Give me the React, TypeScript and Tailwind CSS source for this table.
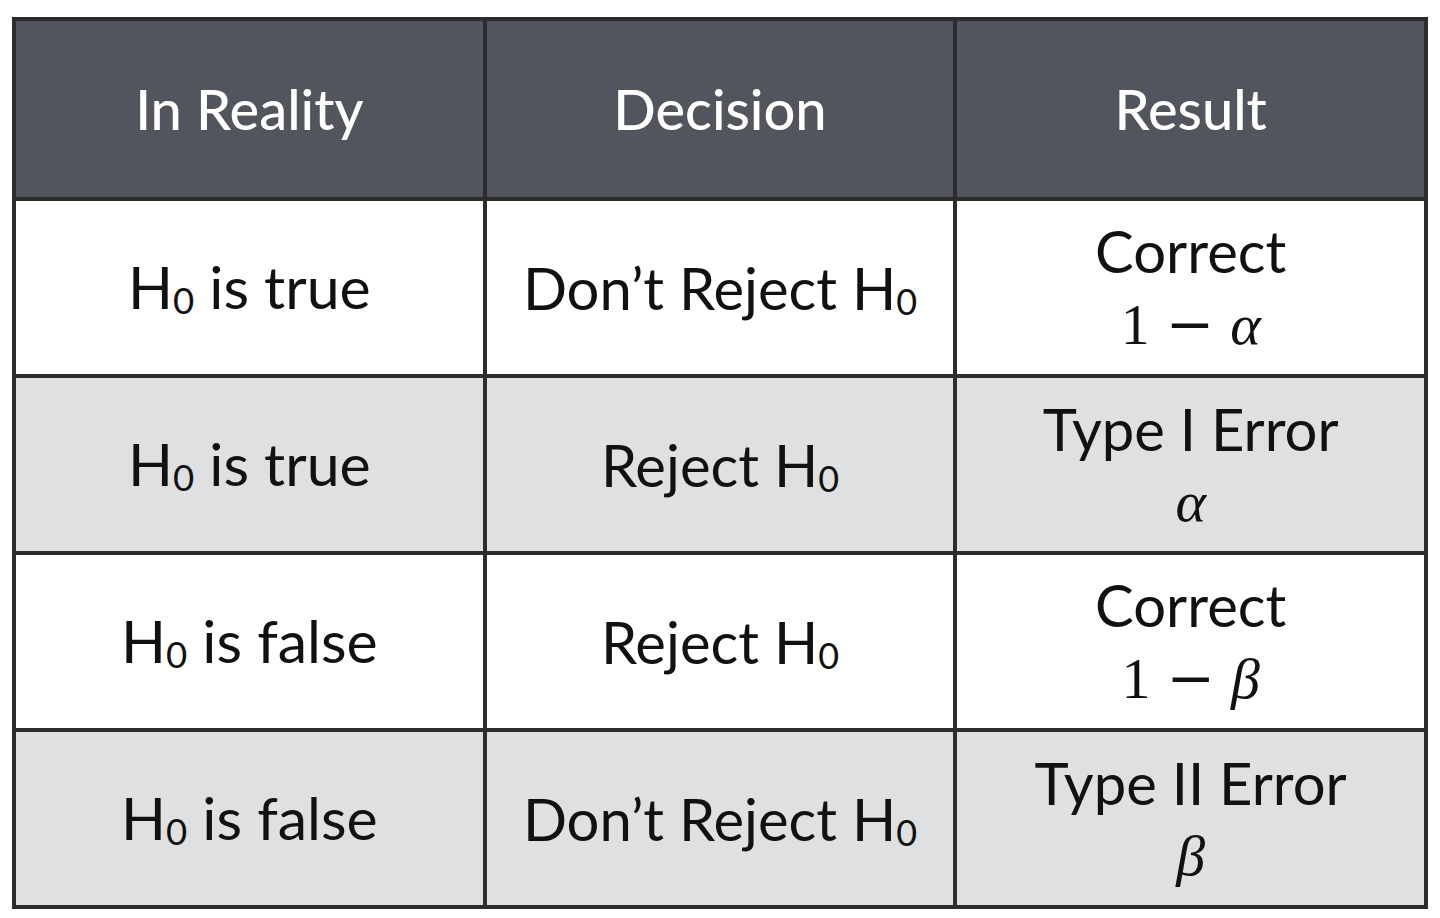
// Hypothesis testing outcomes table
const sans = "font-['Lato','Liberation_Sans',sans-serif]";
const serif = "font-['Liberation_Serif','DejaVu_Serif',serif]";

function H0() {
  return (
    <span>
      H<span className="relative top-[0.14em] text-[0.62em]">0</span>
    </span>
  );
}

function Math({ one, sym }: { one?: boolean; sym: string }) {
  return (
    <div className={`${serif} mt-[6px] text-[58px] leading-[66px] text-[#111]`}>
      {one && (
        <>
          1<span className="mx-[16px] font-['DejaVu_Serif',serif] font-light">−</span>
        </>
      )}
      <span className="italic">{sym}</span>
    </div>
  );
}

type Row = { reality: string; decision: 'keep' | 'reject'; result: string; one?: boolean; sym: string; gray: boolean };

const rows: Row[] = [
  { reality: 'true', decision: 'keep', result: 'Correct', one: true, sym: 'α', gray: false },
  { reality: 'true', decision: 'reject', result: 'Type I Error', sym: 'α', gray: true },
  { reality: 'false', decision: 'reject', result: 'Correct', one: true, sym: 'β', gray: false },
  { reality: 'false', decision: 'keep', result: 'Type II Error', sym: 'β', gray: true },
];

export default function App() {
  return (
    <div className="w-[1440px] h-[918px] bg-white pt-[17px] pl-[12px]">
      <table className={`${sans} w-[1416px] border-collapse border-[4px] border-[#2c2c2f] table-fixed`}>
        <thead>
          <tr className="h-[180px] bg-[#52555d] text-white">
            {['In Reality', 'Decision', 'Result'].map((h) => (
              <th key={h} className="border-[4px] border-[#2c2c2f] text-[56px] font-medium text-center align-middle">
                {h}
              </th>
            ))}
          </tr>
        </thead>
        <tbody>
          {rows.map((r, i) => (
            <tr key={i} className={`h-[177px] ${r.gray ? 'bg-[#dfe0e2]' : 'bg-white'} text-[#111]`}>
              <td className="border-[4px] border-[#2c2c2f] text-[59px] text-center align-middle">
                <H0 /> is {r.reality}
              </td>
              <td className="border-[4px] border-[#2c2c2f] text-[58px] text-center align-middle">
                {r.decision === 'keep' ? 'Don’t Reject ' : 'Reject '}
                <H0 />
              </td>
              <td className="border-[4px] border-[#2c2c2f] text-center align-middle">
                <div className="text-[58px] leading-[68px]">{r.result}</div>
                <Math one={r.one} sym={r.sym} />
              </td>
            </tr>
          ))}
        </tbody>
      </table>
    </div>
  );
}
